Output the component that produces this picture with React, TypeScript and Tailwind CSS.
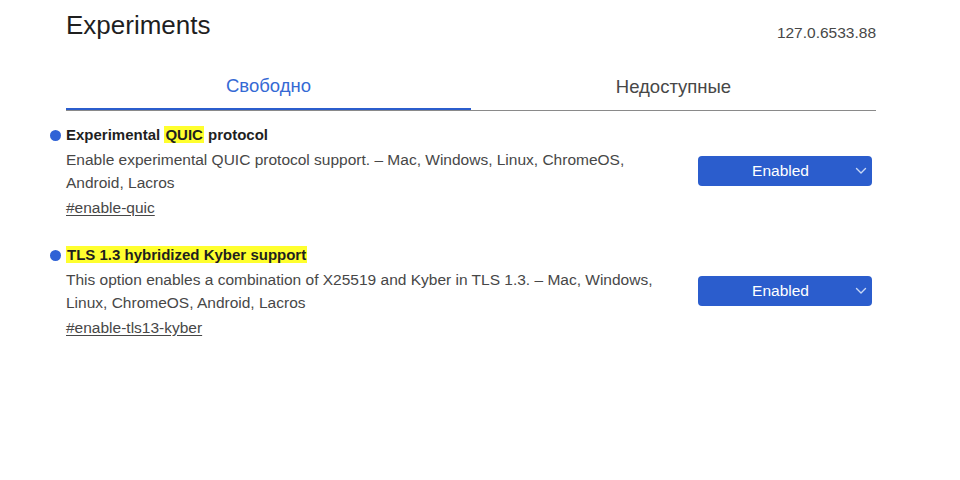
import React from 'react';

type Flag = {
  title: React.ReactNode;
  description: string;
  link: string;
};

const flags: Flag[] = [
  {
    title: (
      <>
        Experimental <mark className="bg-[#ffff2e] text-[#1f1f1f] px-[1px]">QUIC</mark> protocol
      </>
    ),
    description: 'Enable experimental QUIC protocol support. – Mac, Windows, Linux, ChromeOS, Android, Lacros',
    link: '#enable-quic',
  },
  {
    title: <mark className="bg-[#ffff2e] text-[#1f1f1f] px-[1px]">TLS 1.3 hybridized Kyber support</mark>,
    description: 'This option enables a combination of X25519 and Kyber in TLS 1.3. – Mac, Windows, Linux, ChromeOS, Android, Lacros',
    link: '#enable-tls13-kyber',
  },
];

const Chevron = () => (
  <svg width="12" height="8" viewBox="0 0 12 8" fill="none" className="shrink-0">
    <path d="M1.5 1.5 6 6l4.5-4.5" stroke="#c9d8f5" strokeWidth="1.4" strokeLinecap="round" strokeLinejoin="round" />
  </svg>
);

const FlagRow = ({ flag }: { flag: Flag }) => (
  <div className="flex items-center justify-between">
    <div className="relative w-[600px]">
      <span className="absolute -left-[16px] top-[6px] w-[11px] h-[11px] rounded-full bg-[#2f62d6]" />
      <h3 className="text-[15px] leading-[22px] font-bold text-[#1f1f1f]">{flag.title}</h3>
      <p className="mt-[2px] text-[15.5px] leading-[23px] text-[#474747]">{flag.description}</p>
      <a href={flag.link} className="block mt-[2px] text-[15.5px] leading-[23px] text-[#474747] underline underline-offset-2">
        {flag.link}
      </a>
    </div>
    <button className="mr-[4px] mb-[2px] w-[174px] h-[30px] rounded-[4px] bg-[#2b5dcd] flex items-center pl-[8px] pr-[5px] text-white text-[15.5px]">
      <span className="flex-1 text-center">Enabled</span>
      <Chevron />
    </button>
  </div>
);

const App: React.FC = (): JSX.Element => {
  return (
    <div className="w-[960px] h-[480px] bg-white font-['Liberation_Sans',Arial,sans-serif] overflow-hidden">
      <div className="ml-[66px] w-[810px]">
        <div className="flex items-end justify-between pt-[8px]">
          <h1 className="text-[26px] leading-[34px] text-[#1f1f1f]">Experiments</h1>
          <span className="text-[15.5px] leading-[20px] text-[#474747] mb-[-1px]">127.0.6533.88</span>
        </div>

        <div className="mt-[26px] flex border-b border-[#8a8a8a]">
          <div className="w-[405px] h-[42px] flex items-center justify-center text-[18.5px] text-[#3569d4] border-b-2 border-[#2b5dcd] mb-[-1px] pb-[4px]">
            Свободно
          </div>
          <div className="w-[405px] h-[42px] flex items-center justify-center text-[18.5px] text-[#474747] pb-[4px]">
            Недоступные
          </div>
        </div>

        <div className="mt-[13px] flex flex-col gap-[25px]">
          {flags.map((flag) => (
            <FlagRow key={flag.link} flag={flag} />
          ))}
        </div>
      </div>
    </div>
  );
};

export default App;
